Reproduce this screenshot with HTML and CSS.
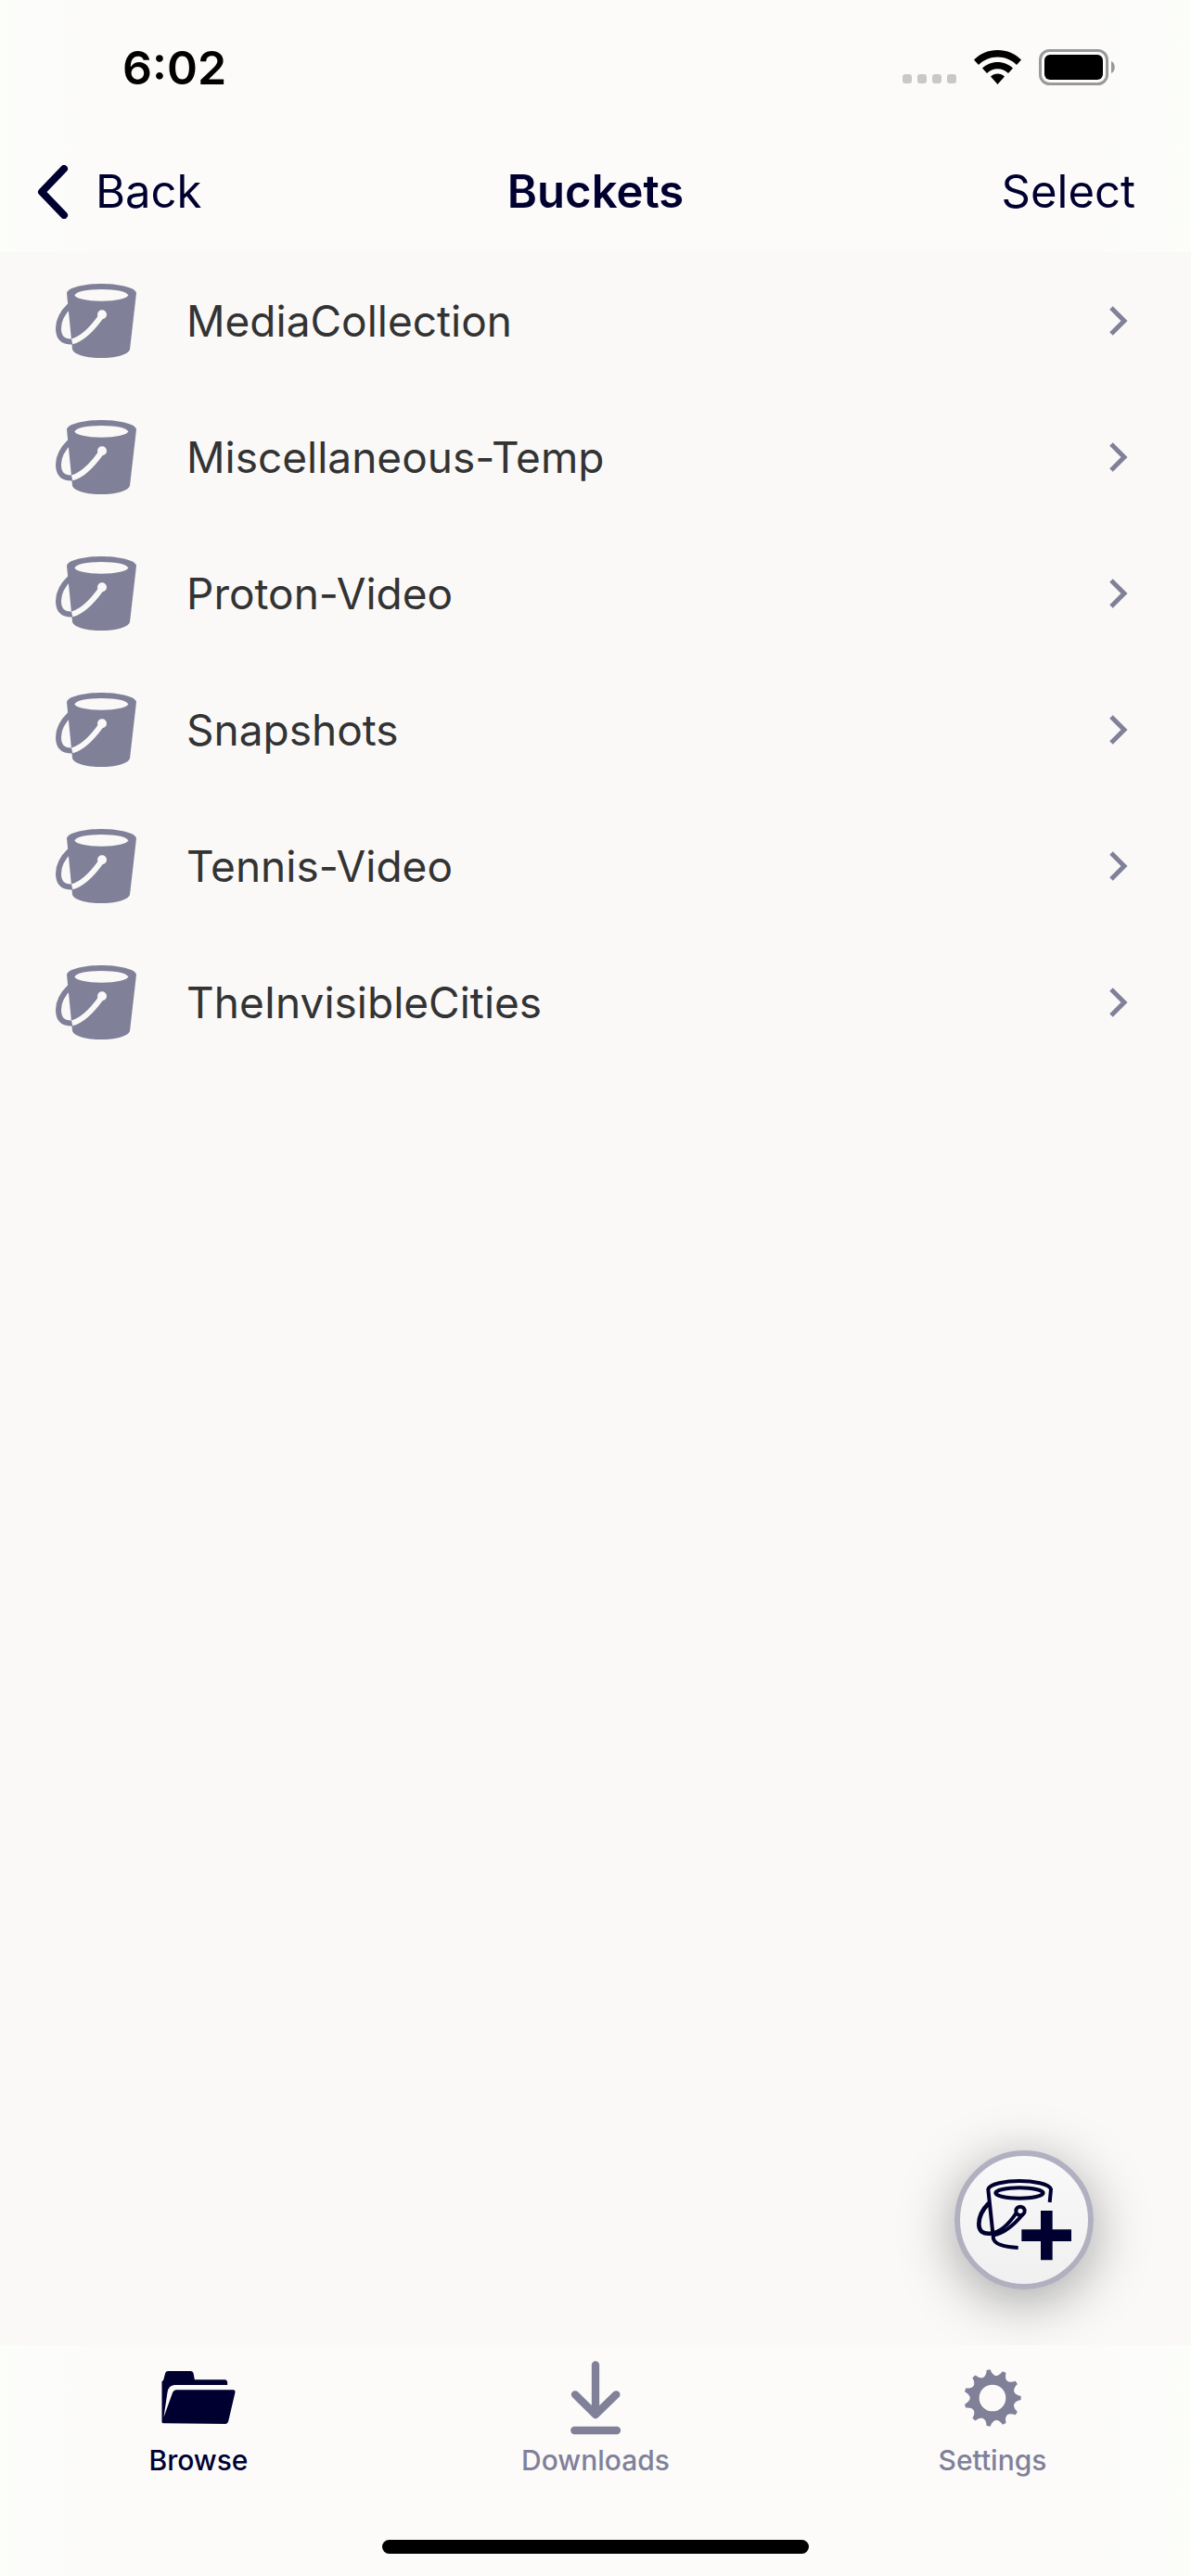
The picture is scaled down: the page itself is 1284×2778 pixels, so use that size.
FILE: index.html
```html
<!DOCTYPE html>
<html lang="en">
<head>
    <meta charset="UTF-8">
    <meta name="viewport" content="width=device-width, initial-scale=1.0">
    <title>Buckets</title>
    <link rel="stylesheet" href="styles.css">
</head>
<body>
    <!-- shared icons -->
    <svg class="sprite" aria-hidden="true">
        <symbol id="bucket" viewBox="60 78 261 240">
            <path fill="#808099" d="M96 108C100 88 160 78 208 78S317 88 321 108L300 290C296 308 250 318 207 318S118 308 114 290Z"/>
            <ellipse cx="208" cy="115" rx="86" ry="19" fill="#faf9f8"/>
            <path fill="none" stroke="#808099" stroke-width="18" d="M106 148C80 173 69 200 69 222C69 250 82 268 113 265"/>
            <path fill="none" stroke="#faf9f8" stroke-width="18" d="M113 265C150 256 182 219 207 184"/>
            <circle cx="210" cy="178" r="15" fill="#faf9f8"/>
        </symbol>
        <symbol id="arrow" viewBox="0 0 20 32">
            <path fill="none" stroke="#808099" stroke-width="5" d="M2 2L16 16L2 30"/>
        </symbol>
    </svg>

    <header class="top">
        <div class="status">
            <span class="time">6:02</span>
            <div class="signals">
                <div class="dots"><i></i><i></i><i></i><i></i></div>
                <svg class="wifi" viewBox="0 0 51 37">
                    <path d="M25.500 0C35.500 0 44.500 4 51 10.500L46 16C40.500 10.500 33.500 7.500 25.500 7.500S10.500 10.500 5 16L0 10.500C6.500 4 15.500 0 25.500 0Z"/>
                    <path d="M25.500 13C32 13 37.500 15.500 42 19.500L37 25C34 22 30 20.300 25.500 20.300S17 22 14 25L9 19.500C13.500 15.500 19 13 25.500 13Z"/>
                    <path d="M25.500 25.500C28.500 25.500 31 26.500 33 28.500L25.500 37L18 28.500C20 26.500 22.500 25.500 25.500 25.500Z"/>
                </svg>
                <svg class="battery" viewBox="0 0 82 39">
                    <rect x="1.500" y="1.500" width="72" height="36" rx="10" fill="none" stroke="#999" stroke-width="3"/>
                    <rect x="6" y="6" width="63" height="27" rx="6"/>
                    <path fill="#999" d="M78 13C83 15 83 24 78 26Z"/>
                </svg>
            </div>
        </div>
        <nav class="bar">
            <button class="back">
                <svg viewBox="0 0 34 58"><path fill="none" stroke="#000030" stroke-width="8" stroke-linecap="round" stroke-linejoin="round" d="M29 4L5 29L29 54"/></svg>
                Back
            </button>
            <h1>Buckets</h1>
            <button class="select">Select</button>
        </nav>
    </header>

    <main>
        <ul class="list">
            <li><a href="#"><svg class="bucket"><use href="#bucket"/></svg><span>MediaCollection</span><svg class="arrow"><use href="#arrow"/></svg></a></li>
            <li><a href="#"><svg class="bucket"><use href="#bucket"/></svg><span>Miscellaneous-Temp</span><svg class="arrow"><use href="#arrow"/></svg></a></li>
            <li><a href="#"><svg class="bucket"><use href="#bucket"/></svg><span>Proton-Video</span><svg class="arrow"><use href="#arrow"/></svg></a></li>
            <li><a href="#"><svg class="bucket"><use href="#bucket"/></svg><span>Snapshots</span><svg class="arrow"><use href="#arrow"/></svg></a></li>
            <li><a href="#"><svg class="bucket"><use href="#bucket"/></svg><span>Tennis-Video</span><svg class="arrow"><use href="#arrow"/></svg></a></li>
            <li><a href="#"><svg class="bucket"><use href="#bucket"/></svg><span>TheInvisibleCities</span><svg class="arrow"><use href="#arrow"/></svg></a></li>
        </ul>
        <button class="add" aria-label="Add bucket">
            <svg viewBox="225 135 414 414">
                <g fill="none" stroke="#000030" stroke-width="12">
                    <path d="M515 285L519 243C515 225 460 216 417 216S320 225 316 243L333 403C338 422 370 430 413 432"/>
                    <ellipse cx="417" cy="255" rx="77" ry="17"/>
                    <path stroke-width="14" d="M318 288C298 308 286 332 286 355C286 380 300 388 324 386"/>
                    <path d="M324 386C358 382 388 348 408 318"/>
                    <path d="M333 391C370 386 402 355 428 324"/>
                    <circle cx="420" cy="313" r="14"/>
                </g>
                <path fill="#000030" d="M486 312H524V373H585V411H524V472H486V411H424V373H486Z"/>
            </svg>
        </button>
    </main>

    <footer class="tabs">
        <nav>
            <a href="#" class="selected">
                <svg viewBox="225 138 237 240"><path fill="#000030" d="M225 205L230 200L236 178Q238 171 245 171H318Q325 171 327 178L331 199H430Q437 200 437 208V216H266Q246 218 243 240L231 320L260 240Q264 232 271 232H456Q463 232 462 240L440 334Q438 342 432 342L230 340Q225 340 225 335Z"/></svg>
                Browse
            </a>
            <a href="#">
                <svg viewBox="243 138 240 240"><path fill="none" stroke="#808099" stroke-width="25" stroke-linecap="round" stroke-linejoin="round" d="M363 151V312M297 247L363 312L430 247M295 363H432"/></svg>
                Downloads
            </a>
            <a href="#">
                <svg viewBox="-120 -120 240 240">
                    <defs><path id="tooth" d="M66 -24Q74 -9 92 -6V6Q74 9 66 24Z"/></defs>
                    <g fill="#808099">
                        <circle r="58" fill="none" stroke="#808099" stroke-width="30"/>
                        <use href="#tooth"/>
                        <use href="#tooth" transform="rotate(32.730)"/>
                        <use href="#tooth" transform="rotate(65.450)"/>
                        <use href="#tooth" transform="rotate(98.180)"/>
                        <use href="#tooth" transform="rotate(130.910)"/>
                        <use href="#tooth" transform="rotate(163.640)"/>
                        <use href="#tooth" transform="rotate(196.360)"/>
                        <use href="#tooth" transform="rotate(229.090)"/>
                        <use href="#tooth" transform="rotate(261.820)"/>
                        <use href="#tooth" transform="rotate(294.550)"/>
                        <use href="#tooth" transform="rotate(327.270)"/>
                    </g>
                </svg>
                Settings
            </a>
        </nav>
        <div class="home"></div>
    </footer>
</body>
</html>
```
FILE: styles.css
```css
*{
    margin: 0;
    padding: 0;
    box-sizing: border-box;
}
body{
    display: flex;
    flex-direction: column;
    min-height: 100vh;
    background: #faf9f8;
    color: #333;
    font-family: Inter, "Liberation Sans", sans-serif;
    font-size: 46px;
}
ul{
    list-style: none;
}
a{
    color: inherit;
    text-decoration: none;
}
button{
    border: 0;
    background: none;
    color: inherit;
    font: inherit;
    cursor: pointer;
}
svg{
    display: block;
    flex: none;
}
.sprite{
    position: absolute;
    width: 0;
    height: 0;
}

/* status bar and title */
.top, .tabs{
    background: linear-gradient(to right, #fcfefa, #fcfbfa 100px, #fcfbfa calc(100% - 100px), #fcfefa);
}
.status{
    display: flex;
    justify-content: space-between;
    align-items: center;
    height: 145px;
    padding: 0 82px 0 132px;
    color: #000;
}
.time{
    font-size: 50px;
    font-weight: 600;
}
.signals{
    display: flex;
    align-items: center;
    gap: 19px;
}
.dots{
    display: flex;
    align-self: flex-end;
    gap: 6px;
    padding-bottom: 2px;
}
.dots i{
    width: 10px;
    height: 10px;
    border-radius: 3px;
    background: #c9c8c7;
}
.wifi{
    width: 51px;
    height: 37px;
}
.battery{
    width: 82px;
    height: 39px;
}
.bar{
    display: grid;
    grid-template-columns: 1fr auto 1fr;
    align-items: center;
    height: 127px;
    padding: 0 40px 4px;
    color: #000030;
    font-size: 49px;
}
.bar h1{
    font-size: 49px;
    font-weight: 600;
}
.back{
    display: flex;
    align-items: center;
    gap: 29px;
    justify-self: start;
}
.back svg{
    width: 34px;
    height: 58px;
}
.select{
    justify-self: end;
    margin-right: 20px;
}

/* bucket list */
main{
    flex: 1;
    position: relative;
}
.list a{
    display: flex;
    align-items: center;
    height: 147px;
    padding: 0 68px 0 60px;
}
.list span{
    flex: 1;
    margin-left: 54px;
}
.bucket{
    width: 87px;
    height: 80px;
}
.arrow{
    width: 20px;
    height: 32px;
}
.add{
    position: absolute;
    right: 105px;
    bottom: 60px;
    width: 150px;
    height: 150px;
    border: 6px solid #b0b0c0;
    border-radius: 50%;
    background: linear-gradient(#f9f9f9, #f0f0f1);
    box-shadow: 0 12px 60px rgba(0, 0, 0, 0.35);
}

/* tab bar */
.tabs{
    position: relative;
    padding-bottom: 24px;
}
.tabs nav{
    display: grid;
    grid-template-columns: repeat(3, 1fr);
    height: 210px;
    padding-top: 17px;
    color: #808099;
    font-size: 30px;
    font-weight: 500;
    line-height: 36px;
}
.tabs a{
    display: flex;
    flex-direction: column;
    align-items: center;
    gap: 9px;
}
.tabs svg{
    width: 80px;
    height: 80px;
}
.tabs .selected{
    color: #000030;
}
.home{
    width: 460px;
    height: 15px;
    margin: 0 auto;
    border-radius: 8px;
    background: #000;
}
```
